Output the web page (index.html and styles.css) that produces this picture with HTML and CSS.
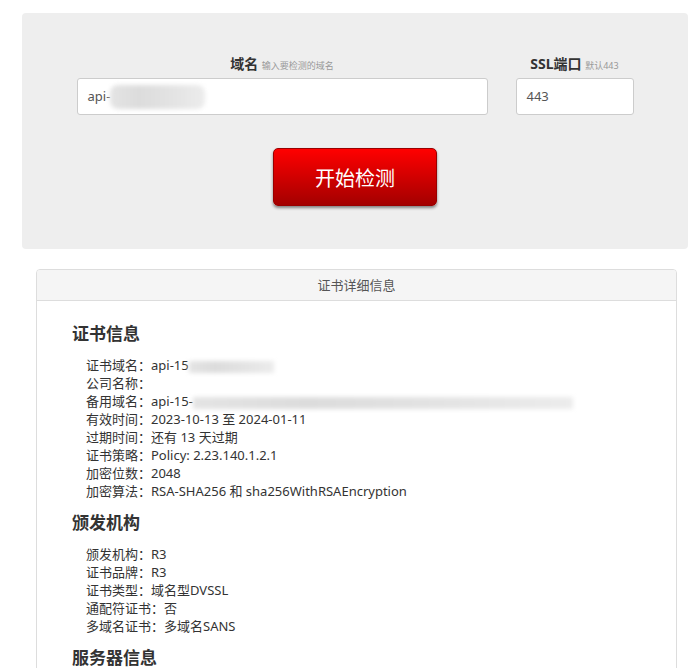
FILE: index.html
```html
<!DOCTYPE html>
<html lang="zh">
<head>
<meta charset="utf-8">
<title>SSL证书检测</title>
<link rel="stylesheet" href="styles.css">
</head>
<body>
<div class="panel">
  <div class="form-row">
    <div class="group group-domain">
      <div class="label"><b>域名</b> <span class="hint">输入要检测的域名</span></div>
      <div class="input">api-<span class="blur blur-input"></span></div>
    </div>
    <div class="group group-port">
      <div class="label"><b>SSL端口</b> <span class="hint">默认443</span></div>
      <div class="input">443</div>
    </div>
  </div>
  <div class="btn-row"><button class="btn">开始检测</button></div>
</div>

<div class="card">
  <div class="card-head">证书详细信息</div>
  <div class="card-body">
    <h3>证书信息</h3>
    <ul class="info">
      <li>证书域名：api-15<span class="blur blur-a"></span></li>
      <li>公司名称：</li>
      <li>备用域名：api-15-<span class="blur blur-b"></span></li>
      <li>有效时间：2023-10-13 至 2024-01-11</li>
      <li>过期时间：还有 13 天过期</li>
      <li>证书策略：Policy: 2.23.140.1.2.1</li>
      <li>加密位数：2048</li>
      <li>加密算法：RSA-SHA256 和 sha256WithRSAEncryption</li>
    </ul>
    <h3>颁发机构</h3>
    <ul class="info">
      <li>颁发机构：R3</li>
      <li>证书品牌：R3</li>
      <li>证书类型：域名型DVSSL</li>
      <li>通配符证书：否</li>
      <li>多域名证书：多域名SANS</li>
    </ul>
    <h3>服务器信息</h3>
  </div>
</div>
</body>
</html>
```
FILE: styles.css
```css
html, body {
  margin: 0;
  padding: 0;
  background: #fff;
  font-family: "Noto Sans", "Noto Sans CJK SC", sans-serif;
  color: #333;
}
.panel {
  margin: 13px 3px 0 22px;
  height: 236px;
  box-sizing: border-box;
  padding-top: 41px;
  background: #eeeeee;
  border-radius: 4px;
}
.form-row {
  display: flex;
  justify-content: center;
  gap: 28px;
}
.group-domain { width: 411px; }
.group-port { width: 118px; }
.label {
  text-align: center;
  line-height: 20px;
  height: 20px;
  font-size: 14px;
  color: #333;
  white-space: nowrap;
}
.label b { font-weight: 700; font-size: 14px; }
.hint { font-size: 9px; color: #999; }
.input {
  margin-top: 4px;
  height: 37px;
  box-sizing: border-box;
  background: #fff;
  border: 1px solid #ccc;
  border-radius: 3px;
  padding-left: 10px;
  line-height: 35px;
  font-size: 13px;
  color: #555;
  display: flex;
  align-items: center;
}
.blur {
  display: inline-block;
  background: linear-gradient(90deg, #e4e4e4, #dcdcdc 30%, #e2e2e2 60%, #ececec);
  filter: blur(2px);
  vertical-align: middle;
}
.blur-input { width: 95px; height: 24px; border-radius: 8px; }
.btn-row {
  display: flex;
  justify-content: center;
  margin-top: 33px;
}
.btn {
  width: 164px;
  height: 58px;
  border: 1px solid #900;
  border-radius: 5px;
  background: linear-gradient(#ff0000, #a30000);
  color: #fff;
  font-family: "Noto Sans CJK SC", sans-serif;
  font-size: 20px;
  box-shadow: 0 2px 3px rgba(0,0,0,0.45);
  padding: 0;
}
.card {
  margin: 20px 0 0 36px;
  width: 639px;
  border: 1px solid #ddd;
  border-radius: 4px;
  overflow: hidden;
}
.card-head {
  height: 30px;
  line-height: 30px;
  background: #f5f5f5;
  border-bottom: 1px solid #ddd;
  text-align: center;
  font-size: 13px;
  color: #555;
}
.card-body {
  padding: 21px 35px 60px 35px;
}
.card-body h3 {
  margin: 0;
  font-size: 17px;
  line-height: 24px;
  font-weight: 700;
  color: #333;
}
.info {
  list-style: none;
  margin: 10px 0 11px 0;
  padding: 0 0 0 14px;
  font-size: 13px;
  line-height: 18px;
  color: #333;
}
.info li { white-space: nowrap; }
.blur-a { width: 85px; height: 12px; }
.blur-b { width: 380px; height: 12px; }
```
